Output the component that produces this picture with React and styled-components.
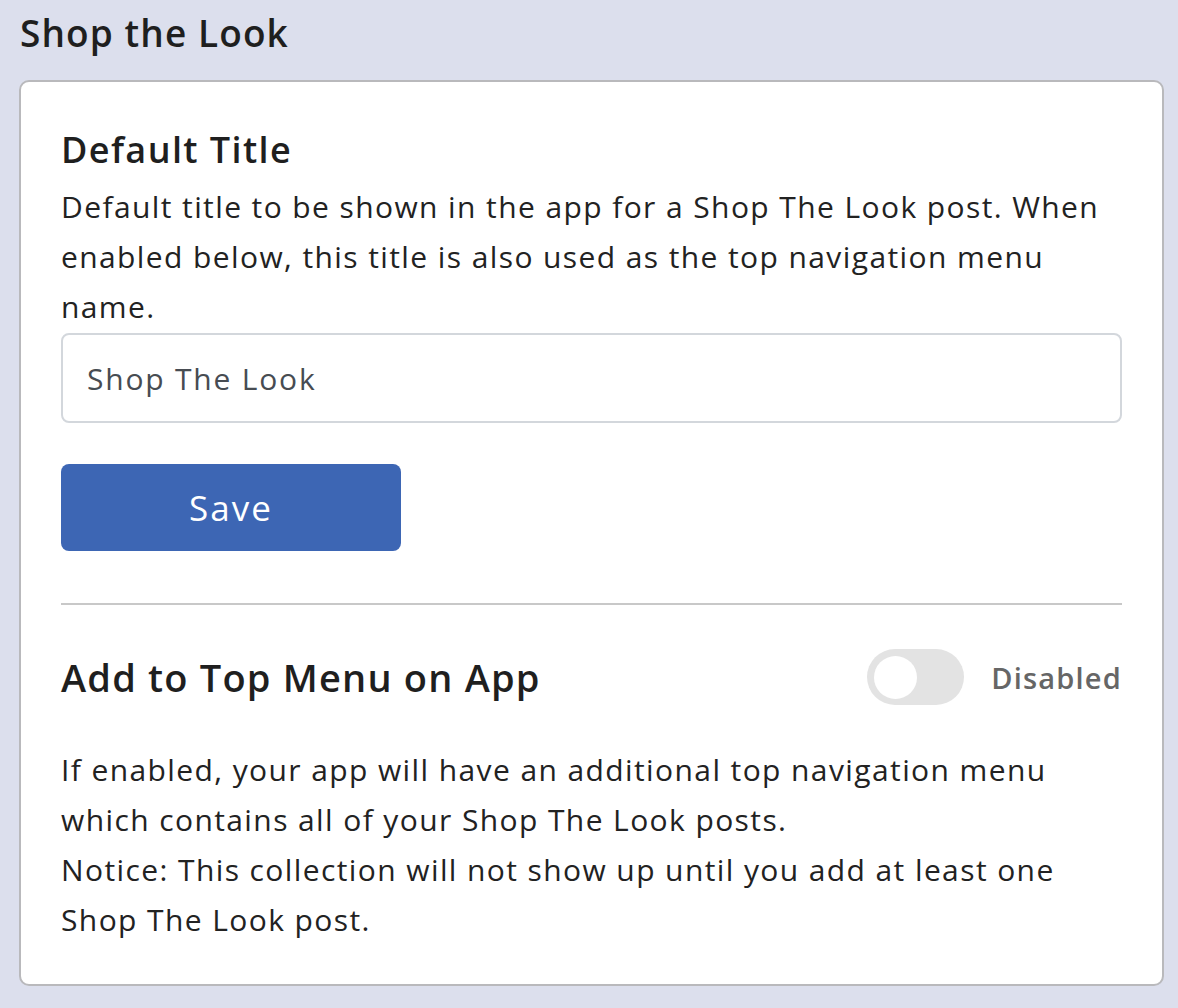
import styled, { createGlobalStyle } from 'styled-components'

const GlobalStyle = createGlobalStyle`
    body{
        margin: 0;
        background: #dcdfed;
        font-family: 'Open Sans', 'Noto Sans', sans-serif;
        color: #222222;
    }
`;

export default function App (){
    return(
        <Page>
            <GlobalStyle />
            <PageTitle>Shop the Look</PageTitle>
            <Card>
                <SectionTitle>Default Title</SectionTitle>
                <Text>
                    Default title to be shown in the app for a Shop The Look post. When enabled below, this title is also used as the top navigation menu name.
                </Text>
                <Input defaultValue='Shop The Look' />
                <SaveButton>Save</SaveButton>
                <Divider />
                <Row>
                    <SectionTitle $big>Add to Top Menu on App</SectionTitle>
                    <ToggleWrap>
                        <Toggle $on={false}>
                            <div className='knob'></div>
                        </Toggle>
                        <ToggleLabel>Disabled</ToggleLabel>
                    </ToggleWrap>
                </Row>
                <Text $top={40}>
                    If enabled, your app will have an additional top navigation menu which contains all of your Shop The Look posts.
                    <br />
                    Notice: This collection will not show up until you add at least one Shop The Look post.
                </Text>
            </Card>
        </Page>
    )
}

const Page = styled.div`
    padding: 12px 14px 21px 19px;
`;

const PageTitle = styled.h1`
    margin: 0 0 26px 1px;
    font-size: 37px;
    line-height: 42px;
    font-weight: 600;
    letter-spacing: 1.1px;
    color: #1f1f1f;
`;

const Card = styled.div`
    background: #ffffff;
    border: 2px solid #b9b9bc;
    border-radius: 10px;
    padding: 46px 40px 39px 40px;
`;

const SectionTitle = styled.h2`
    margin: 0;
    font-size: ${p => p.$big ? 38 : 36}px;
    line-height: 44px;
    font-weight: 600;
    letter-spacing: ${p => p.$big ? 1.2 : 1.4}px;
    color: #1f1f1f;
`;

const Text = styled.p`
    margin: ${p => p.$top ?? 10}px 0 0;
    font-size: 30px;
    line-height: 50px;
    letter-spacing: 1.4px;
    color: #222222;
`;

const Input = styled.input`
    display: block;
    box-sizing: border-box;
    width: 100%;
    height: 90px;
    margin-top: 1px;
    padding: 0 24px;
    border: 2px solid #d3d7dc;
    border-radius: 8px;
    font-family: 'Open Sans', sans-serif;
    font-size: 30px;
    letter-spacing: 1.8px;
    color: #474c52;
    outline: none;
`;

const SaveButton = styled.button`
    display: block;
    width: 340px;
    height: 87px;
    margin-top: 41px;
    border: none;
    border-radius: 8px;
    background: #3d66b4;
    color: #ffffff;
    font-family: 'Open Sans', sans-serif;
    font-size: 35px;
    letter-spacing: 2px;
`;

const Divider = styled.hr`
    margin: 52px 0 0;
    border: none;
    height: 2px;
    background: #c8c8c8;
`;

const Row = styled.div`
    display: flex;
    justify-content: space-between;
    align-items: center;
    height: 56px;
    margin-top: 44px;
`;

const ToggleWrap = styled.div`
    display: flex;
    align-items: center;
    gap: 27px;
`;

const Toggle = styled.div`
    width: 97px;
    height: 56px;
    border-radius: 28px;
    background: ${p => p.$on ? '#3d66b4' : '#e3e3e3'};
    display: flex;
    align-items: center;
    justify-content: ${p => p.$on ? 'flex-end' : 'flex-start'};
    padding: 0 7px;
    box-sizing: border-box;

    .knob{
        width: 43px;
        height: 43px;
        border-radius: 50%;
        background: #ffffff;
    }
`;

const ToggleLabel = styled.span`
    font-size: 29px;
    font-weight: 600;
    letter-spacing: 1.2px;
    color: #666666;
`;
